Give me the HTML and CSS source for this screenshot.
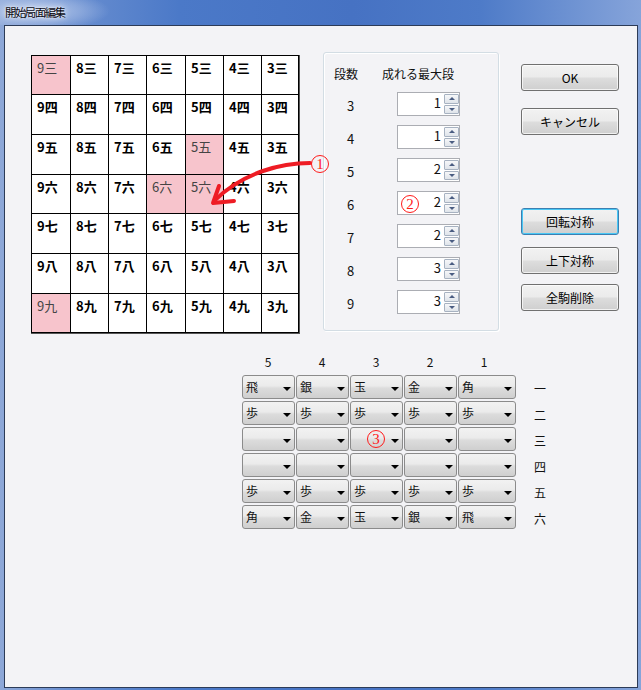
FILE: index.html
```html
<!DOCTYPE html>
<html lang="ja">
<head>
<meta charset="utf-8">
<title>開始局面編集</title>
<link rel="stylesheet" href="styles.css">
</head>
<body>
<div class="window">
  <div class="titlebar"><span class="title">開始局面編集</span></div>
  <div class="client">
    <div class="top">
      <div class="board">
        <div class="cell pink">9三</div><div class="cell">8三</div><div class="cell">7三</div><div class="cell">6三</div><div class="cell">5三</div><div class="cell">4三</div><div class="cell">3三</div>
        <div class="cell">9四</div><div class="cell">8四</div><div class="cell">7四</div><div class="cell">6四</div><div class="cell">5四</div><div class="cell">4四</div><div class="cell">3四</div>
        <div class="cell">9五</div><div class="cell">8五</div><div class="cell">7五</div><div class="cell">6五</div><div class="cell pink">5五</div><div class="cell">4五</div><div class="cell">3五</div>
        <div class="cell">9六</div><div class="cell">8六</div><div class="cell">7六</div><div class="cell pink">6六</div><div class="cell pink">5六</div><div class="cell">4六</div><div class="cell">3六</div>
        <div class="cell">9七</div><div class="cell">8七</div><div class="cell">7七</div><div class="cell">6七</div><div class="cell">5七</div><div class="cell">4七</div><div class="cell">3七</div>
        <div class="cell">9八</div><div class="cell">8八</div><div class="cell">7八</div><div class="cell">6八</div><div class="cell">5八</div><div class="cell">4八</div><div class="cell">3八</div>
        <div class="cell pink">9九</div><div class="cell">8九</div><div class="cell">7九</div><div class="cell">6九</div><div class="cell">5九</div><div class="cell">4九</div><div class="cell">3九</div>
      </div>

      <div class="group">
        <div class="g-head"><span class="h1">段数</span><span class="h2">成れる最大段</span></div>
        <div class="g-rows">
          <div class="g-row"><span class="g-label">3</span><div class="spin"><span class="spin-val">1</span><div class="spin-btns"><span class="sb up"></span><span class="sb down"></span></div></div></div>
          <div class="g-row"><span class="g-label">4</span><div class="spin"><span class="spin-val">1</span><div class="spin-btns"><span class="sb up"></span><span class="sb down"></span></div></div></div>
          <div class="g-row"><span class="g-label">5</span><div class="spin"><span class="spin-val">2</span><div class="spin-btns"><span class="sb up"></span><span class="sb down"></span></div></div></div>
          <div class="g-row"><span class="g-label">6</span><div class="spin"><span class="spin-val">2</span><div class="spin-btns"><span class="sb up"></span><span class="sb down"></span></div></div></div>
          <div class="g-row"><span class="g-label">7</span><div class="spin"><span class="spin-val">2</span><div class="spin-btns"><span class="sb up"></span><span class="sb down"></span></div></div></div>
          <div class="g-row"><span class="g-label">8</span><div class="spin"><span class="spin-val">3</span><div class="spin-btns"><span class="sb up"></span><span class="sb down"></span></div></div></div>
          <div class="g-row"><span class="g-label">9</span><div class="spin"><span class="spin-val">3</span><div class="spin-btns"><span class="sb up"></span><span class="sb down"></span></div></div></div>
        </div>
      </div>

      <div class="buttons">
        <div class="btn btn-ok">OK</div>
        <div class="btn btn-cancel">キャンセル</div>
        <div class="btn btn-rot focused">回転対称</div>
        <div class="btn btn-flip">上下対称</div>
        <div class="btn btn-clear">全駒削除</div>
      </div>
    </div>

    <div class="bottom">
      <div class="col-heads">
        <span>5</span><span>4</span><span>3</span><span>2</span><span>1</span>
      </div>
      <div class="combos">
        <div class="combo"><span>飛</span><i></i></div><div class="combo"><span>銀</span><i></i></div><div class="combo"><span>玉</span><i></i></div><div class="combo"><span>金</span><i></i></div><div class="combo"><span>角</span><i></i></div><span class="row-label">一</span>
        <div class="combo"><span>歩</span><i></i></div><div class="combo"><span>歩</span><i></i></div><div class="combo"><span>歩</span><i></i></div><div class="combo"><span>歩</span><i></i></div><div class="combo"><span>歩</span><i></i></div><span class="row-label">二</span>
        <div class="combo"><span></span><i></i></div><div class="combo"><span></span><i></i></div><div class="combo"><span></span><i></i></div><div class="combo"><span></span><i></i></div><div class="combo"><span></span><i></i></div><span class="row-label">三</span>
        <div class="combo"><span></span><i></i></div><div class="combo"><span></span><i></i></div><div class="combo"><span></span><i></i></div><div class="combo"><span></span><i></i></div><div class="combo"><span></span><i></i></div><span class="row-label">四</span>
        <div class="combo"><span>歩</span><i></i></div><div class="combo"><span>歩</span><i></i></div><div class="combo"><span>歩</span><i></i></div><div class="combo"><span>歩</span><i></i></div><div class="combo"><span>歩</span><i></i></div><span class="row-label">五</span>
        <div class="combo"><span>角</span><i></i></div><div class="combo"><span>金</span><i></i></div><div class="combo"><span>玉</span><i></i></div><div class="combo"><span>銀</span><i></i></div><div class="combo"><span>飛</span><i></i></div><span class="row-label">六</span>
      </div>
    </div>
  </div>

  <svg class="overlay" width="641" height="690" viewBox="0 0 641 690">
    <path d="M310 163 C 282 163, 244 172, 215 200" fill="none" stroke="#ee1c24" stroke-width="4" stroke-linecap="round"/>
    <path d="M219 186 L213 203 L234 201" fill="none" stroke="#ee1c24" stroke-width="4" stroke-linecap="round" stroke-linejoin="round"/>
  </svg>
  <span class="mark mark1">1</span>
  <span class="mark mark2">2</span>
  <span class="mark mark3">3</span>
</div>
</body>
</html>
```

FILE: styles.css
```css
* { box-sizing: border-box; }

html, body {
  margin: 0;
  padding: 0;
}

body {
  width: 641px;
  height: 690px;
  overflow: hidden;
  font-family: "Noto Sans CJK JP", "Noto Sans", sans-serif;
  font-size: 12px;
  color: #111;
}

.window {
  position: relative;
  width: 641px;
  height: 690px;
  display: flex;
  flex-direction: column;
  padding: 0 3px 2px 4px;
  background: linear-gradient(90deg, #8ea8d8 0%, #6a8fd0 10%, #4b79c8 28%, #4672c3 55%, #4e7bc8 75%, #86a4da 100%);
}

.titlebar {
  height: 25px;
  flex: none;
  display: flex;
  align-items: center;
  background: radial-gradient(ellipse 75px 20px at 35px 11px, rgba(200, 214, 240, 0.85) 0%, rgba(175, 195, 232, 0.5) 60%, rgba(175, 195, 232, 0) 100%);
  margin-left: -4px;
  padding-left: 5px;
}

.title {
  font-size: 11.5px;
  letter-spacing: -1.6px;
  color: #0a0a14;
  text-shadow: 0 0 6px #ffffff, 0 0 2px rgba(255,255,255,0.8);
  line-height: 14px;
  margin-top: -1px;
}

.client {
  flex: 1;
  border: 1px solid #2c3b57;
  background: #f3f3f6;
  padding: 26px 0 0 26px;
  display: flex;
  flex-direction: column;
}

.top {
  display: flex;
  align-items: flex-start;
}

/* board */
.board {
  margin-top: 3px;
  display: grid;
  grid-template-columns: 38px 37px 37px 38px 37px 37px 36px;
  grid-template-rows: 38px 39px 39px 38px 39px 39px 38px;
  gap: 1px;
  padding: 1px;
  background: #000;
  border-right: 1px solid #555;
  border-bottom: 1px solid #555;
}

.cell {
  background: #fff;
  font-weight: 700;
  font-size: 13px;
  line-height: 16px;
  padding: 4px 0 0 5px;
  color: #000;
  white-space: nowrap;
}

.cell.pink {
  background: #f7c4cc;
  font-weight: 400;
  color: #444;
}

/* group box */
.group {
  margin-left: 23px;
  width: 176px;
  border: 1px solid #d3dde4;
  border-radius: 3px;
  box-shadow: inset 1px 1px 0 #ffffff, 1px 1px 0 #ffffff;
  padding: 0 0 16px 10px;
}

.g-head {
  margin-top: 13px;
  display: flex;
  line-height: 16px;
  font-size: 12px;
}

.h1 { width: 48px; }

.g-rows {
  margin-top: 10px;
  display: flex;
  flex-direction: column;
  gap: 9px;
}

.g-row {
  display: flex;
  align-items: center;
  height: 24px;
}

.g-label {
  width: 33px;
  text-align: center;
  font-size: 13px;
  padding-top: 2px;
}

.spin {
  margin-left: 30px;
  width: 63px;
  height: 24px;
  border: 1px solid #abadb3;
  background: #fff;
  display: flex;
}

.spin-val {
  flex: 1;
  text-align: right;
  padding-right: 3px;
  font-size: 13px;
  line-height: 20px;
}

.spin-btns {
  width: 15px;
  margin: 1px 0 1px 0;
  display: flex;
  flex-direction: column;
  gap: 1px;
}

.sb {
  flex: 1;
  border: 1px solid #a7b2c1;
  border-radius: 1px;
  background: linear-gradient(#f6f7f9, #dfe4ea);
  display: flex;
  align-items: center;
  justify-content: center;
}

.sb::after {
  content: "";
  width: 0;
  height: 0;
  border-left: 3px solid transparent;
  border-right: 3px solid transparent;
}

.sb.up::after { border-bottom: 3px solid #4a5d82; }
.sb.down::after { border-top: 3px solid #4a5d82; }

/* buttons */
.buttons {
  margin-left: 22px;
  margin-top: 12px;
  display: flex;
  flex-direction: column;
  width: 98px;
}

.btn {
  height: 27px;
  border: 1px solid #707070;
  border-radius: 3px;
  background: linear-gradient(#f2f2f2 0%, #ebebeb 48%, #dddddd 52%, #cfcfcf 100%);
  box-shadow: inset 0 0 0 1px rgba(255,255,255,0.7);
  display: flex;
  align-items: center;
  justify-content: center;
  font-size: 12px;
  color: #000;
}

.btn-cancel { margin-top: 17px; }
.btn-rot { margin-top: 73px; }
.btn-flip { margin-top: 12px; }
.btn-clear { margin-top: 10px; }

.btn.focused {
  border-color: #3c7fb1;
  box-shadow: inset 0 0 0 1px #48c7f5;
}

/* bottom combos */
.bottom {
  margin-top: 17px;
  margin-left: 210px;
}

.col-heads {
  display: flex;
  height: 22px;
  line-height: 22px;
  font-size: 12px;
}

.col-heads span {
  width: 54px;
  text-align: center;
}

.combos {
  margin-top: 2px;
  margin-left: 1px;
  display: grid;
  grid-template-columns: 53px 53px 53px 53px 58px 46px;
  grid-auto-rows: 24px;
  column-gap: 1px;
  row-gap: 2px;
}

.combo {
  border: 1px solid #8b8b8b;
  border-radius: 3px;
  background: linear-gradient(#f2f2f2 0%, #ebebeb 45%, #dcdcdc 55%, #cfcfcf 100%);
  display: flex;
  align-items: center;
  padding: 0 3px 0 3px;
  font-size: 12px;
}

.combo span {
  flex: 1;
  line-height: 20px;
}

.combo i {
  width: 0;
  height: 0;
  margin-top: 4px;
  border-left: 4px solid transparent;
  border-right: 4px solid transparent;
  border-top: 4px solid #000;
}

.row-label {
  text-align: center;
  line-height: 24px;
  font-size: 12px;
  padding-top: 2px;
}

/* annotations */
.overlay {
  position: absolute;
  left: 0;
  top: 0;
  pointer-events: none;
}

.mark {
  position: absolute;
  width: 18px;
  height: 18px;
  border: 1px solid #ff1a1a;
  border-radius: 50%;
  color: #ff1a1a;
  font-family: "Liberation Serif", serif;
  font-size: 15px;
  line-height: 16px;
  text-align: center;
}

.mark1 { left: 311px; top: 155px; }
.mark2 { left: 401px; top: 195px; }
.mark3 { left: 367px; top: 430px; }
```
